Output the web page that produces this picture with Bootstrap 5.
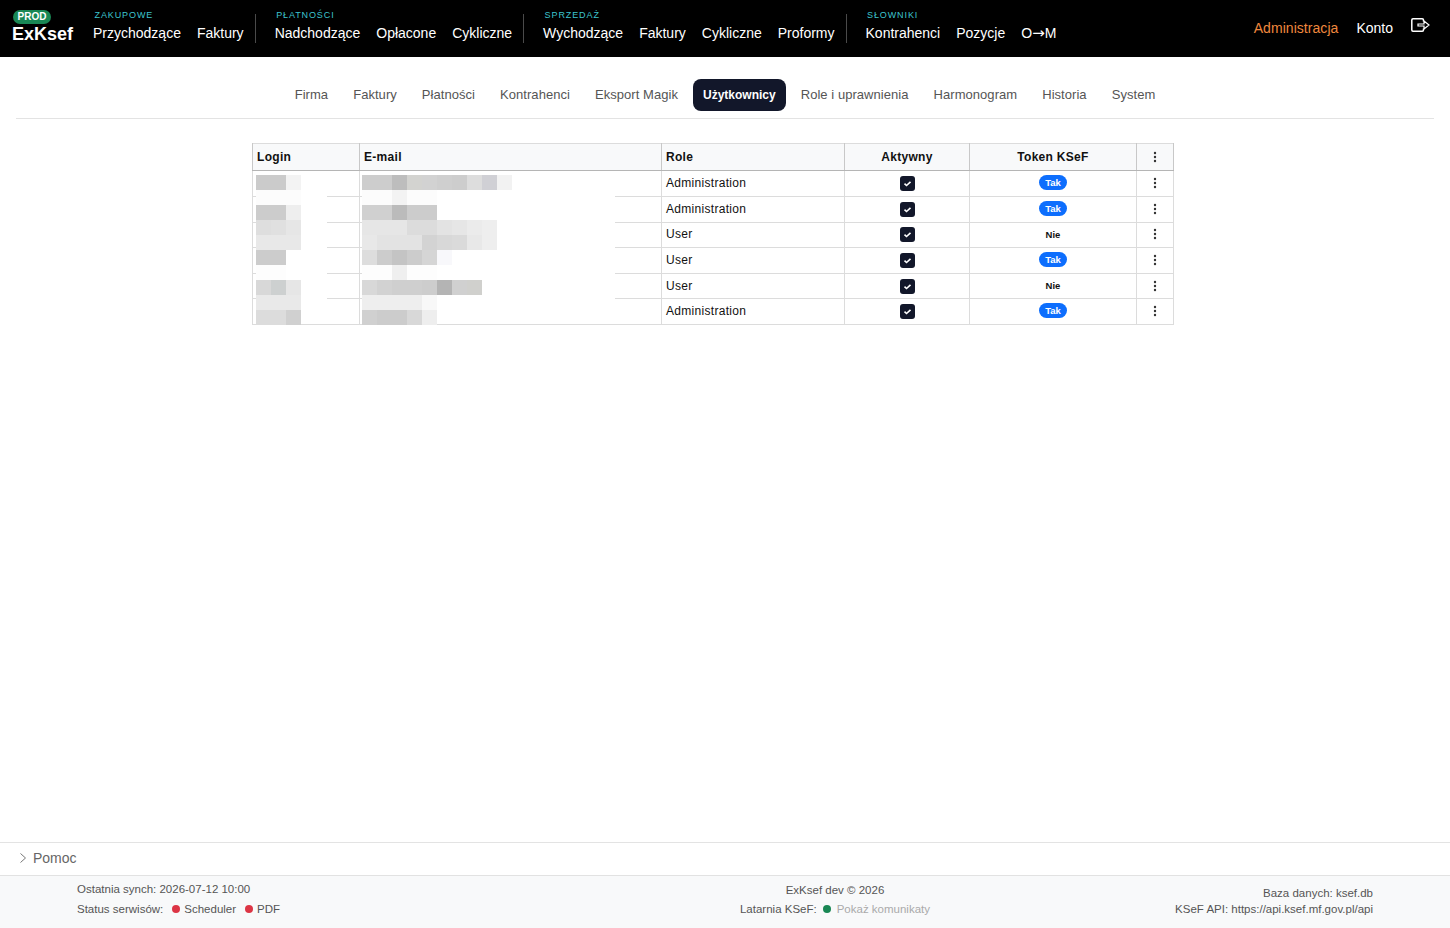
<!DOCTYPE html>
<html lang="pl">
<head>
    <meta charset="UTF-8">
    <meta name="viewport" content="width=device-width, initial-scale=1.0">
    <title>ExKsef</title>
    <link href="https://cdn.jsdelivr.net/npm/bootstrap@5.3.0/dist/css/bootstrap.min.css" rel="stylesheet">
    <style>
        body {
            font-family: "Liberation Sans", Arial, sans-serif;
            background-color: #fff;
        }
        .top-bar {
            background-color: #000;
            height: 57px;
            padding: 0 20px 0 12px;
        }
        .brand-box {
            width: 81px;
            padding-top: 10px;
        }
        .env-badge {
            background-color: #198754;
            color: #fff;
            font-size: 10px;
            font-weight: 700;
            line-height: 14px;
            height: 14px;
            width: 38px;
            margin-left: 1px;
            text-align: center;
            border-radius: 7px;
        }
        .brand-name {
            color: #fff;
            font-size: 18px;
            font-weight: 700;
            line-height: 20px;
        }
        .nav-group {
            height: 57px;
            padding-top: 9px;
            padding-right: 12px;
            margin-right: 19px;
            position: relative;
        }
        .nav-group::after {
            content: "";
            position: absolute;
            right: 0;
            top: 14px;
            height: 29px;
            width: 1px;
            background-color: #4a4a4a;
        }
        .nav-group.no-line {
            margin-right: 0;
        }
        .nav-group.no-line::after {
            display: none;
        }
        .group-label {
            color: #3dc4cf;
            font-size: 9px;
            line-height: 12px;
            letter-spacing: .9px;
            text-transform: uppercase;
            padding-left: 1.5px;
            margin-bottom: 2px;
        }
        .bar-link {
            color: #fff;
            font-size: 14px;
            line-height: 20px;
            text-decoration: none;
        }
        .bar-link.admin {
            color: #f0883e;
            letter-spacing: .05px;
            margin-right: 18px;
        }
        .arrow-glyph {
            font-family: "DejaVu Sans", sans-serif;
            font-size: 15px;
            line-height: 1;
        }
        .account-links {
            padding-bottom: 2px;
        }
        .logout-icon {
            margin-left: 18px;
            margin-bottom: 6px;
        }
        .tab-row {
            margin: 0 16px;
            padding: 22px 0 7px;
            border-bottom: 1px solid #e3e3e3;
            gap: 5px;
        }
        .tab-row .nav-link {
            color: #555;
            font-size: 13px;
            line-height: 32px;
            padding: 0 10px;
            border-radius: 8px;
            letter-spacing: .05px;
        }
        .tab-row .nav-link.active {
            background-color: #12172a;
            color: #fff;
            font-weight: 700;
            font-size: 12px;
            letter-spacing: 0;
        }
        .table-wrap {
            width: 921px;
            margin: 24px 0 0 252px;
            position: relative;
        }
        .user-table {
            table-layout: fixed;
            font-size: 12px;
            margin: 0;
            border-color: #dcdcdc;
            color: #111;
            letter-spacing: .3px;
        }
        .user-table th {
            background-color: #f8f9fa;
            height: 27.4px;
            padding: 0 4px;
            border-color: #c8c8c8;
            border-bottom: 1px solid #b5b5b5;
            vertical-align: middle;
            font-weight: 700;
        }
        .user-table td {
            height: 25.6px;
            padding: 0 4px 1px;
            vertical-align: middle;
        }
        .blur-layer {
            position: absolute;
            left: 0;
            top: 0;
            pointer-events: none;
        }
        .user-check {
            display: block;
            width: 15px;
            height: 15px;
            margin: 1px auto 0;
            background-color: #12172a;
            border-radius: 3px;
        }
        .token-yes {
            display: inline-block;
            background-color: #0d6efd;
            color: #fff;
            font-size: 9.5px;
            font-weight: 700;
            line-height: 15px;
            width: 28px;
            border-radius: 8px;
            text-align: center;
            letter-spacing: 0;
            vertical-align: middle;
            margin-bottom: 2px;
        }
        .token-no {
            display: inline-block;
            color: #111;
            font-size: 9.5px;
            font-weight: 700;
            line-height: 15px;
            letter-spacing: 0;
            vertical-align: middle;
            margin-bottom: 2px;
        }
        .kebab {
            display: block;
            margin: 0 auto;
        }
        .help-strip {
            border-top: 1px solid #e3e3e3;
            height: 33px;
            color: #666;
            font-size: 14px;
            padding: 0 0 2px 20px;
            gap: 7px;
        }
        .page-foot {
            background-color: #f8f9fa;
            border-top: 1px solid #e2e2e2;
            height: 53px;
            font-size: 11.5px;
            color: #555;
        }
        .foot-left {
            margin-left: 77px;
            padding-top: 3px;
            line-height: 20px;
        }
        .foot-center {
            position: absolute;
            left: 685px;
            width: 300px;
            padding-top: 5px;
            line-height: 19px;
            text-align: center;
        }
        .foot-right {
            margin-left: auto;
            margin-right: 77px;
            padding-top: 9px;
            line-height: 16px;
            text-align: right;
        }
        .dot {
            display: inline-block;
            width: 8px;
            height: 8px;
            border-radius: 50%;
            margin: 0 4px 0 9px;
        }
        .dot-red {
            background-color: #dc3545;
        }
        .dot-green {
            background-color: #198754;
            margin: 0 6px;
        }
        .muted-link {
            color: #aaa;
        }
    </style>
</head>
<body class="d-flex flex-column vh-100">
    <!-- Top navigation -->
    <nav class="top-bar d-flex align-items-start">
        <div class="brand-box">
            <div class="env-badge">PROD</div>
            <div class="brand-name">ExKsef</div>
        </div>
        <div class="nav-group">
            <div class="group-label">Zakupowe</div>
            <div class="d-flex gap-3">
                <a class="bar-link" href="#">Przychodzące</a>
                <a class="bar-link" href="#">Faktury</a>
            </div>
        </div>
        <div class="nav-group">
            <div class="group-label">Płatności</div>
            <div class="d-flex gap-3">
                <a class="bar-link" href="#">Nadchodzące</a>
                <a class="bar-link" href="#">Opłacone</a>
                <a class="bar-link" href="#">Cykliczne</a>
            </div>
        </div>
        <div class="nav-group">
            <div class="group-label">Sprzedaż</div>
            <div class="d-flex gap-3">
                <a class="bar-link" href="#">Wychodzące</a>
                <a class="bar-link" href="#">Faktury</a>
                <a class="bar-link" href="#">Cykliczne</a>
                <a class="bar-link" href="#">Proformy</a>
            </div>
        </div>
        <div class="nav-group no-line">
            <div class="group-label">Słowniki</div>
            <div class="d-flex gap-3">
                <a class="bar-link" href="#">Kontrahenci</a>
                <a class="bar-link" href="#">Pozycje</a>
                <a class="bar-link" href="#">O<span class="arrow-glyph">→</span>M</a>
            </div>
        </div>
        <div class="account-links ms-auto d-flex align-items-center h-100">
            <a class="bar-link admin" href="#">Administracja</a>
            <a class="bar-link" href="#">Konto</a>
            <svg class="logout-icon" width="19" height="14" viewBox="0 0 19 14" fill="none" stroke="#fff" stroke-width="1.500">
                <path d="M12.500 3.500V2C12.500 1.200 12 .8 11.200 .8H2C1.200 .8 .8 1.200 .8 2V12C.8 12.800 1.200 13.200 2 13.200H11.200C12 13.200 12.500 12.800 12.500 12V10.500"/>
                <path d="M7 6H13V3L18 7 13 11V8H7Z" stroke-width="1.200"/>
            </svg>
        </div>
    </nav>

    <main class="flex-grow-1">
        <ul class="nav tab-row justify-content-center">
            <li class="nav-item"><a class="nav-link" href="#">Firma</a></li>
            <li class="nav-item"><a class="nav-link" href="#">Faktury</a></li>
            <li class="nav-item"><a class="nav-link" href="#">Płatności</a></li>
            <li class="nav-item"><a class="nav-link" href="#">Kontrahenci</a></li>
            <li class="nav-item"><a class="nav-link" href="#">Eksport Magik</a></li>
            <li class="nav-item"><a class="nav-link active" href="#">Użytkownicy</a></li>
            <li class="nav-item"><a class="nav-link" href="#">Role i uprawnienia</a></li>
            <li class="nav-item"><a class="nav-link" href="#">Harmonogram</a></li>
            <li class="nav-item"><a class="nav-link" href="#">Historia</a></li>
            <li class="nav-item"><a class="nav-link" href="#">System</a></li>
        </ul>

        <div class="table-wrap">
            <table class="table table-bordered user-table">
                <colgroup>
                    <col style="width: 107px"><col style="width: 302px"><col style="width: 183px">
                    <col style="width: 125px"><col style="width: 167px"><col style="width: 37px">
                </colgroup>
                <thead>
                    <tr>
                        <th>Login</th>
                        <th>E-mail</th>
                        <th>Role</th>
                        <th class="text-center">Aktywny</th>
                        <th class="text-center">Token KSeF</th>
                        <th><svg class="kebab" width="4" height="12" viewBox="0 0 4 12" fill="#333"><circle cx="2" cy="2" r="1.200"/><circle cx="2" cy="6" r="1.200"/><circle cx="2" cy="10" r="1.200"/></svg></th>
                    </tr>
                </thead>
                <tbody id="userRows"></tbody>
            </table>
            <!-- masked login / e-mail values, 15px mosaic -->
            <svg id="blurLayer" class="blur-layer" width="400" height="185" viewBox="252 143 400 185"></svg>
        </div>
    </main>

    <div class="help-strip d-flex align-items-center">
        <svg width="6" height="10" viewBox="0 0 6 10" fill="none" stroke="#777"><path d="M.5.5 5.500 5 .5 9.500"/></svg>
        <span>Pomoc</span>
    </div>
    <footer class="page-foot d-flex">
        <div class="foot-left">
            <div>Ostatnia synch: 2026-07-12 10:00</div>
            <div>Status serwisów:<span class="dot dot-red"></span>Scheduler<span class="dot dot-red"></span>PDF</div>
        </div>
        <div class="foot-center">
            <div>ExKsef dev © 2026</div>
            <div>Latarnia KSeF:<span class="dot dot-green"></span><span class="muted-link">Pokaż komunikaty</span></div>
        </div>
        <div class="foot-right">
            <div>Baza danych: ksef.db</div>
            <div>KSeF API: https://api.ksef.mf.gov.pl/api</div>
        </div>
    </footer>

    <script>
        const users = [
            ['Administration', true], ['Administration', true], ['User', false],
            ['User', true], ['User', false], ['Administration', true]
        ];
        const kebab = '<svg class="kebab" width="4" height="12" viewBox="0 0 4 12" fill="#333"><circle cx="2" cy="2" r="1.200"/><circle cx="2" cy="6" r="1.200"/><circle cx="2" cy="10" r="1.200"/></svg>';
        const check = '<svg class="user-check" viewBox="0 0 15 15"><path d="M4.500 7.700 6.500 9.500 10.500 5.800" fill="none" stroke="#fff" stroke-width="1.600"/></svg>';

        document.getElementById('userRows').innerHTML = users.map(([role, token]) => `
            <tr>
                <td></td>
                <td></td>
                <td>${role}</td>
                <td class="text-center">${check}</td>
                <td class="text-center">${token ? '<span class="token-yes">Tak</span>' : '<span class="token-no">Nie</span>'}</td>
                <td>${kebab}</td>
            </tr>`).join('');

        // [y, startX, colours...] one row of the mosaic
        const mosaic = [
            [175, 256, '#cbcbcb', '#cbcbcb', '#f3f3f3'],
            [190, 256, '#fcfcfc', '#fcfcfc', '#fcfcfc'],
            [205, 256, '#cccccc', '#cccccc', '#eeeeee'],
            [220, 256, '#dedede', '#e0e0e0', '#e6e6e6'],
            [235, 256, '#e8e8e8', '#e8e8e8', '#e8e8e8'],
            [250, 256, '#cccccc', '#cccccc'],
            [265, 256, '#fdfdfd', '#fdfdfd'],
            [280, 256, '#d8d8d8', '#cdd0d0', '#e6e6e6'],
            [295, 256, '#e9e9e9', '#e9e9e9', '#e9e9e9'],
            [310, 256, '#dcdcdc', '#dcdcdc', '#d0d0d0'],
            [175, 362, '#cdcdcd', '#cdcdcd', '#bdbdbd', '#d3d3d0', '#d2d2d2', '#cfcfcf', '#cdcdcd', '#dddddd', '#d0d0d5', '#f2f2f2'],
            [190, 362, '#fcfcfc', '#fcfcfc', '#f3f3f3', '#fcfcfc', '#fcfcfc'],
            [205, 362, '#d0d0d0', '#d0d0d0', '#bbbbbb', '#cccccc', '#cccccc'],
            [220, 362, '#e6e6e6', '#e6e6e6', '#e6e6e6', '#dcdcdc', '#dcdcdc', '#e3e3e3', '#e6e6e6', '#ebebeb', '#eeeeee'],
            [235, 362, '#e8e8e8', '#e3e3e3', '#e3e3e3', '#e3e3e3', '#d3d3d3', '#d8d8d8', '#dadada', '#e8e8e8', '#eeeeee'],
            [250, 362, '#dddddd', '#cccccc', '#c4c4c4', '#cccccc', '#d5d5d5', '#f8f8fb'],
            [265, 362, '#fdfdfd', '#fdfdfd', '#efefef', '#fdfdfd', '#fdfdfd'],
            [280, 362, '#d8d8d8', '#d2d2d2', '#cfcfcf', '#cfcfcf', '#cdcdcd', '#b4b4b4', '#d0d0d0', '#d0d0cd'],
            [295, 362, '#eeeeee', '#eeeeee', '#eeeeee', '#eeeeee', '#f8f8f8'],
            [310, 362, '#d0d0d0', '#cccccc', '#cccccc', '#d8d8d8', '#eeeeee']
        ];
        let rects = '<rect x="256" y="172" width="71" height="151" fill="#fff"/><rect x="362" y="172" width="253" height="151" fill="#fff"/>';
        mosaic.forEach(([y, startX, ...colours]) => {
            colours.forEach((colour, i) => {
                rects += `<rect x="${startX + i * 15}" y="${y}" width="15" height="15" fill="${colour}"/>`;
            });
        });
        document.getElementById('blurLayer').innerHTML = rects;
    </script>
    <script src="https://cdn.jsdelivr.net/npm/bootstrap@5.3.0/dist/js/bootstrap.bundle.min.js"></script>
</body>
</html>
